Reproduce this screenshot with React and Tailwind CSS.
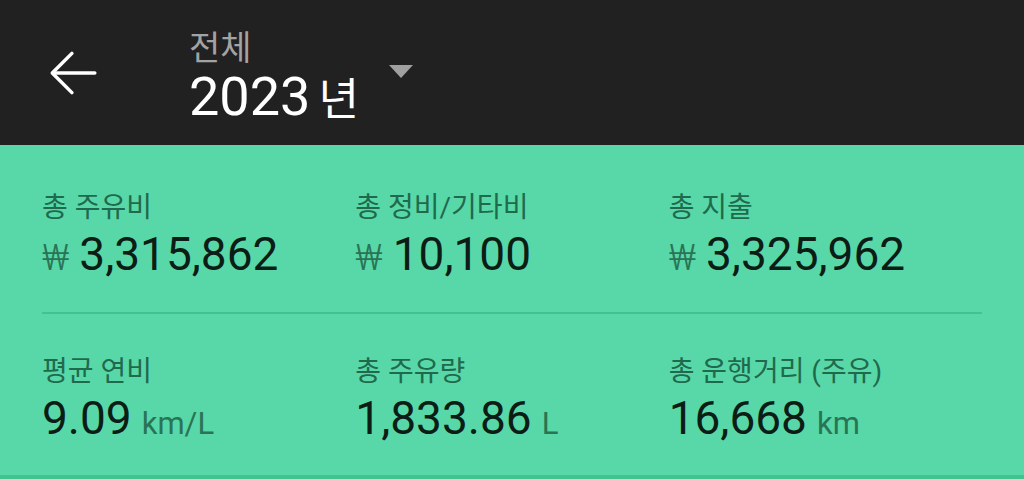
const FONT = { fontFamily: 'Roboto, "Noto Sans CJK KR", sans-serif' }

const stats = [
  [
    { label: '총 주유비', won: true, value: '3,315,862' },
    { label: '총 정비/기타비', won: true, value: '10,100' },
    { label: '총 지출', won: true, value: '3,325,962' },
  ],
  [
    { label: '평균 연비', value: '9.09', unit: 'km/L' },
    { label: '총 주유량', value: '1,833.86', unit: 'L' },
    { label: '총 운행거리 (주유)', value: '16,668', unit: 'km' },
  ],
]

function Stat({ label, won, value, unit }) {
  return (
    <div className="flex flex-col">
      <span className="text-[28px] leading-[36px] text-[#1f6a4d]">{label}</span>
      <span className="mt-[2px] flex h-[52px] items-baseline whitespace-nowrap text-[46px] leading-[52px] text-[#0c1d15]">
        {won ? (
          <span className="mr-[10px] text-[36px] leading-none font-light text-[#2a7456]">₩</span>
        ) : null}
        <span>{value}</span>
        {unit ? (
          <span className="ml-[10px] text-[31px] leading-none text-[#2a7456]">{unit}</span>
        ) : null}
      </span>
    </div>
  )
}

export default function App() {
  return (
    <div className="w-[1024px] h-[479px] overflow-hidden bg-[#58d8a8]" style={FONT}>
      <header className="flex h-[145px] items-start bg-[#212121]">
        <svg
          className="ml-[49px] mt-[49px] h-[48px] w-[48px]"
          viewBox="0 0 44 44"
          fill="none"
          stroke="#ffffff"
          strokeWidth="3.2"
          strokeLinecap="round"
          strokeLinejoin="round"
        >
          <path d="M42 22H4" />
          <path d="M21 4L3 22l18 18" />
        </svg>
        <div className="ml-[92px] mt-[29px] flex flex-col">
          <span className="text-[34px] leading-[38px] text-[#a3a3a3]">전체</span>
          <span className="flex items-baseline text-[54px] leading-[60px] text-white">
            <span>2023</span>
            <span className="ml-[8px] text-[44px] leading-none">년</span>
          </span>
        </div>
        <svg className="ml-[30px] mt-[65px] h-[13px] w-[24px]" viewBox="0 0 24 13">
          <path d="M0 0h24L12 13z" fill="#a0a0a0" />
        </svg>
      </header>

      <section className="h-[334px] border-b-4 border-[#3fc48f] px-[42px] pt-[45px]">
        <div className="grid grid-cols-3">
          {stats[0].map((s) => (
            <Stat key={s.label} {...s} />
          ))}
        </div>
        <div className="mt-[32px] mb-[40px] h-[2px] bg-[#3fc48f]" />
        <div className="grid grid-cols-3">
          {stats[1].map((s) => (
            <Stat key={s.label} {...s} />
          ))}
        </div>
      </section>
    </div>
  )
}
